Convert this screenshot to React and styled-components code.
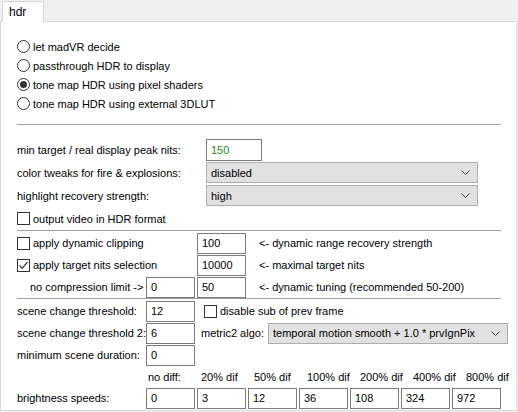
import React from 'react'
import styled, { createGlobalStyle } from 'styled-components'

const GlobalStyle = createGlobalStyle`
  html, body {
    margin: 0;
    padding: 0;
    background: #f0f0f0;
  }
  body {
    font-family: Tahoma, "Liberation Sans", Arial, sans-serif;
    font-size: 11px;
    color: #000;
  }
`

const speeds = [
  { head: 'no diff:', value: '0' },
  { head: '20% dif', value: '3' },
  { head: '50% dif', value: '12' },
  { head: '100% dif', value: '36' },
  { head: '200% dif', value: '108' },
  { head: '400% dif', value: '324' },
  { head: '800% dif', value: '972' },
]

const modes = [
  { text: 'let madVR decide', on: false },
  { text: 'passthrough HDR to display', on: false },
  { text: 'tone map HDR using pixel shaders', on: true },
  { text: 'tone map HDR using external 3DLUT', on: false },
]

function Chevron() {
  return (
    <svg width="9" height="5" viewBox="0 0 9 5">
      <path d="M0.5 0.5 L4.5 4.5 L8.5 0.5" fill="none" stroke="#404040" strokeWidth="1" />
    </svg>
  )
}

function Check({ on, children }) {
  return (
    <CheckLabel>
      <CheckBox>
        {on && (
          <svg width="11" height="11" viewBox="0 0 11 11">
            <path d="M1.5 5.5 L4.2 8.3 L9.5 2" fill="none" stroke="#333" strokeWidth="1.2" />
          </svg>
        )}
      </CheckBox>
      {children}
    </CheckLabel>
  )
}

export default function App() {
  return (
    <Page>
      <GlobalStyle />
      <TabStrip>
        <Tab>hdr</Tab>
      </TabStrip>
      <Panel>
        <RadioGroup>
          {modes.map((m) => (
            <RadioRow key={m.text}>
              <RadioCircle $on={m.on} />
              {m.text}
            </RadioRow>
          ))}
        </RadioGroup>

        <Separator $top={11} $bottom={13} />

        <Row $h={23}>
          <Label $w={187}>min target / real display peak nits:</Label>
          <Field $w={56} $h={22} $green>150</Field>
        </Row>
        <Row $h={23}>
          <Label $w={187}>color tweaks for fire &amp; explosions:</Label>
          <Select $w={272}>
            <span>disabled</span>
            <Chevron />
          </Select>
        </Row>
        <Row $h={23}>
          <Label $w={187}>highlight recovery strength:</Label>
          <Select $w={272}>
            <span>high</span>
            <Chevron />
          </Select>
        </Row>
        <Row $h={23}>
          <Check>output video in HDR format</Check>
        </Row>

        <Separator $top={0} $bottom={1} />

        <Row $h={22}>
          <Cell $w={178}>
            <Check>apply dynamic clipping</Check>
          </Cell>
          <Field>100</Field>
          <Note>&lt;- dynamic range recovery strength</Note>
        </Row>
        <Row $h={22}>
          <Cell $w={178}>
            <Check on>apply target nits selection</Check>
          </Cell>
          <Field>10000</Field>
          <Note>&lt;- maximal target nits</Note>
        </Row>
        <Row $h={22}>
          <Label $w={127} $indent={13}>no compression limit -&gt;</Label>
          <Field>0</Field>
          <Field>50</Field>
          <Note>&lt;- dynamic tuning (recommended 50-200)</Note>
        </Row>

        <Separator $top={0} $bottom={1} />

        <Row $h={22}>
          <Label $w={127}>scene change threshold:</Label>
          <Field>12</Field>
          <Cell $w={0} $pad={7}>
            <Check>disable sub of prev frame</Check>
          </Cell>
        </Row>
        <Row $h={22}>
          <Label $w={127}>scene change threshold 2:</Label>
          <Field>6</Field>
          <Label $w={69} $indent={4}>metric2 algo:</Label>
          <Select $w={240}>
            <span>temporal motion smooth + 1.0 * prvIgnPix</span>
            <Chevron />
          </Select>
        </Row>
        <Row $h={22}>
          <Label $w={127}>minimum scene duration:</Label>
          <Field>0</Field>
        </Row>
        <Row $h={21}>
          <Label $w={127} />
          {speeds.map((s) => (
            <Head key={s.head}>{s.head}</Head>
          ))}
        </Row>
        <Row $h={22}>
          <Label $w={127}>brightness speeds:</Label>
          {speeds.map((s) => (
            <Field key={s.head}>{s.value}</Field>
          ))}
        </Row>
      </Panel>
    </Page>
  )
}

// ==================== STYLED COMPONENTS ====================
const Page = styled.div`
  width: 518px;
  height: 412px;
  padding-top: 1px;
  box-sizing: border-box;
`
const TabStrip = styled.div`
  display: flex;
  padding-left: 2px;
  height: 20px;
  position: relative;
  z-index: 1;
`
const Tab = styled.div`
  width: 42px;
  height: 21px;
  box-sizing: border-box;
  background: #fff;
  border: 1px solid #d9d9d9;
  border-bottom: none;
  padding: 3px 0 0 6px;
  font-size: 12px;
`
const Panel = styled.div`
  width: 517px;
  height: 390px;
  box-sizing: border-box;
  background: #fff;
  border: 1px solid #d9d9d9;
  padding: 15px 15px 0 16px;
`
const RadioGroup = styled.div`
  display: flex;
  flex-direction: column;
`
const RadioRow = styled.label`
  display: flex;
  align-items: center;
  height: 19px;
  gap: 3px;
`
const RadioCircle = styled.span`
  width: 13px;
  height: 13px;
  box-sizing: border-box;
  border-radius: 50%;
  border: 1px solid #333;
  background: #fff;
  display: flex;
  align-items: center;
  justify-content: center;
  &::after {
    content: '';
    display: ${({ $on }) => ($on ? 'block' : 'none')};
    width: 7px;
    height: 7px;
    border-radius: 50%;
    background: #333;
  }
`
const Separator = styled.div`
  height: 1px;
  width: 484px;
  background: #a0a0a0;
  margin: ${({ $top }) => $top}px 0 ${({ $bottom }) => $bottom}px;
`
const Row = styled.div`
  display: flex;
  align-items: center;
  height: ${({ $h }) => $h}px;
  gap: 2px;
`
const Label = styled.span`
  width: ${({ $w }) => $w}px;
  flex: none;
  padding-left: ${({ $indent }) => $indent || 0}px;
  box-sizing: border-box;
  white-space: nowrap;
`
const Cell = styled.div`
  width: ${({ $w }) => ($w ? `${$w}px` : 'auto')};
  padding-left: ${({ $pad }) => $pad || 0}px;
  flex: none;
`
const CheckLabel = styled.label`
  display: flex;
  align-items: center;
  gap: 3px;
  white-space: nowrap;
`
const CheckBox = styled.span`
  width: 13px;
  height: 13px;
  box-sizing: border-box;
  border: 1px solid #333;
  background: #fff;
  display: flex;
  align-items: center;
  justify-content: center;
`
const Field = styled.div`
  width: ${({ $w }) => $w || 49}px;
  height: ${({ $h }) => $h || 21}px;
  flex: none;
  box-sizing: border-box;
  border: 1px solid #7a7a7a;
  background: #fff;
  display: flex;
  align-items: center;
  padding-left: 4px;
  color: ${({ $green }) => ($green ? '#228b22' : '#000')};
`
const Select = styled.div`
  width: ${({ $w }) => $w}px;
  height: 21px;
  flex: none;
  box-sizing: border-box;
  border: 1px solid #adadad;
  background: #e1e1e1;
  display: flex;
  align-items: center;
  justify-content: space-between;
  padding: 0 7px 0 4px;
  white-space: nowrap;
`
const Note = styled.span`
  padding-left: 11px;
  white-space: nowrap;
`
const Head = styled.span`
  width: 49px;
  flex: none;
  padding-left: 2px;
  white-space: nowrap;
`
